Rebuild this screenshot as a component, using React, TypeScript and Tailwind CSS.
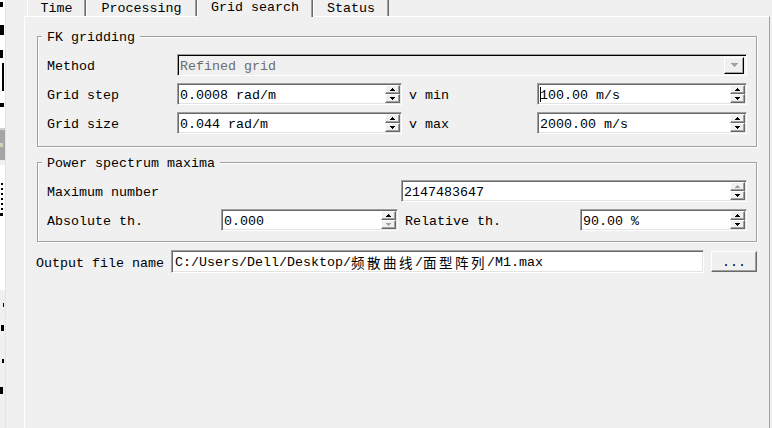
import type { ReactNode } from "react";

const raised =
  "bg-[#f0f0f0] border border-t-white border-l-white border-r-[#696969] border-b-[#696969] shadow-[inset_-1px_-1px_0_#a0a0a0]";
const sunken =
  "border border-t-[#a0a0a0] border-l-[#a0a0a0] border-r-white border-b-white";

function Arrow({ up, off }: { up?: boolean; off?: boolean }) {
  return (
    <svg width="5" height="3" viewBox="0 0 5 3" shapeRendering="crispEdges">
      <polygon points={up ? "2.5,0 5,3 0,3" : "0,0 5,0 2.5,3"} fill={off ? "#a0a0a0" : "#000"} />
    </svg>
  );
}

function Label({ children, className = "" }: { children: ReactNode; className?: string }) {
  return <span className={`pt-[4px] whitespace-nowrap ${className}`}>{children}</span>;
}

function Spin({
  value,
  className = "",
  upOff,
  downOff,
  caret,
}: {
  value: string;
  className?: string;
  upOff?: boolean;
  downOff?: boolean;
  caret?: boolean;
}) {
  return (
    <div
      className={`flex h-[22px] bg-white ${sunken} shadow-[inset_1px_1px_0_#696969,inset_-1px_-1px_0_#e3e3e3] ${className}`}
    >
      <div className="flex flex-1 items-center pl-[2px] pt-[3px] whitespace-nowrap">
        {caret && <span className="-mr-[1px] mb-[2px] h-[15px] w-[1px] bg-black" />}
        {value}
      </div>
      <div className="mr-[1px] flex w-[15px] flex-col py-[1px]">
        <div className={`${raised} flex flex-1 items-center justify-center`}>
          <Arrow up off={upOff} />
        </div>
        <div className={`${raised} flex flex-1 items-center justify-center`}>
          <Arrow off={downOff} />
        </div>
      </div>
    </div>
  );
}

function Group({ title, className = "", children }: { title: string; className?: string; children: ReactNode }) {
  return (
    <div
      className={`relative ml-[12px] w-[720px] border border-[#a0a0a0] shadow-[1px_1px_0_#fff,inset_1px_1px_0_#fff] ${className}`}
    >
      <span className="absolute -top-[7px] left-[4px] bg-[#f0f0f0] px-[5px] pt-[1px] leading-[14px]">{title}</span>
      {children}
    </div>
  );
}

function Tab({ label, width, active }: { label: string; width: string; active?: boolean }) {
  return (
    <div
      className={`flex items-center justify-center border-l border-l-white border-r border-r-[#696969] shadow-[inset_-1px_0_0_#a0a0a0] ${width} ${
        active ? "relative z-10 h-[17px] bg-[#f0f0f0] pb-[2px]" : "h-[16px] pt-[2px]"
      }`}
    >
      {label}
    </div>
  );
}

// clipped edge of the window lying behind this one
function BehindStrip() {
  return (
    <div className="flex h-full w-[5px] flex-col">
      <div className="h-[2px] bg-white" />
      <div className="h-[5px] bg-white"><div className="h-full w-[3px] bg-black" /></div>
      <div className="h-[18px] bg-white" />
      <div className="h-[10px] bg-white"><div className="h-full w-[4px] bg-black" /></div>
      <div className="h-[15px] bg-white" />
      <div className="h-[8px] bg-white"><div className="h-full w-[3px] bg-black" /></div>
      <div className="h-[5px] bg-white" />
      <div className="h-[28px] bg-white"><div className="ml-[2px] h-full w-[2px] bg-black" /></div>
      <div className="h-[12px] bg-white" />
      <div className="h-[4px] bg-white"><div className="h-full w-[4px] bg-black" /></div>
      <div className="h-[21px] bg-white" />
      <div className="h-[2px] bg-[#d0d0d0]" />
      <div className="flex h-[30px] flex-col justify-center bg-[#a5a5a5]">
        <div className="h-[4px] w-[3px] bg-[#d8cfb8]" />
      </div>
      <div className="h-[5px] bg-[#f0f0f0]" />
      <div className="h-[18px] bg-white" />
      <div className="h-[30px] bg-white">
        <div className="ml-[1px] h-full w-[2px] bg-[repeating-linear-gradient(#000_0_2px,transparent_2px_5px)]" />
      </div>
      <div className="h-[10px] bg-white"><div className="h-[3px] w-[3px] bg-black" /></div>
      <div className="h-[67px] bg-white" />
      <div className="h-[13px]" />
      <div className="h-[4px]"><div className="ml-[3px] h-full w-[1px] bg-black" /></div>
      <div className="h-[18px]" />
      <div className="h-[6px]"><div className="ml-[1px] h-full w-[3px] bg-black" /></div>
      <div className="h-[28px]" />
      <div className="h-[4px]"><div className="ml-[2px] h-full w-[2px] bg-black" /></div>
      <div className="h-[24px]" />
      <div className="h-[7px]"><div className="h-full w-[3px] bg-black" /></div>
    </div>
  );
}

export default function App() {
  return (
    <div className="flex h-[428px] w-[772px] overflow-hidden bg-[#f0f0f0] font-['Liberation_Mono',monospace] text-[13.33px] leading-none text-black">
      <div className="flex w-[24px] shrink-0">
        <BehindStrip />
        <div className="w-[1px] bg-[#e3e3e3]" />
      </div>

      <div className="flex w-[746px] shrink-0 flex-col">
        <div className="flex h-[16px] items-start pl-[3px]">
          <Tab label="Time" width="w-[59px]" />
          <Tab label="Processing" width="w-[111px]" />
          <Tab label="Grid search" width="w-[116px]" active />
          <Tab label="Status" width="w-[76px]" />
        </div>

        <div className="flex-1 border-l border-t border-l-white border-t-white border-r border-r-[#a0a0a0] pt-[19px]">
          <Group title="FK gridding" className="pt-[17px] pb-[12px] pl-[9px]">
            <div className="grid grid-cols-[130px_225px_135px_210px] items-center gap-y-[7px]">
              <Label>Method</Label>
              <div
                className={`col-span-3 flex h-[22px] items-center bg-[#f0f0f0] ${sunken} shadow-[inset_1px_1px_0_#000]`}
              >
                <span className="flex-1 pl-[2px] pt-[3px] text-[#6d6d6d]">Refined grid</span>
                <div className="mr-[2px] flex h-[17px] w-[20px] items-center justify-center border border-t-white border-l-white border-r-black border-b-black bg-[#f0f0f0] shadow-[inset_-1px_-1px_0_#a0a0a0]">
                  <svg width="7" height="4" viewBox="0 0 7 4" shapeRendering="crispEdges">
                    <polygon points="0,0 7,0 3.5,4" fill="#a0a0a0" />
                  </svg>
                </div>
              </div>

              <Label>Grid step</Label>
              <Spin value="0.0008 rad/m" />
              <Label className="pl-[7px]">v min</Label>
              <Spin value="100.00 m/s" caret />

              <Label>Grid size</Label>
              <Spin value="0.044 rad/m" />
              <Label className="pl-[7px]">v max</Label>
              <Spin value="2000.00 m/s" />
            </div>
          </Group>

          <Group title="Power spectrum maxima" className="mt-[15px] pt-[17px] pb-[10px] pl-[9px]">
            <div className="flex flex-col gap-[7px]">
              <div className="flex items-center">
                <Label className="w-[354px]">Maximum number</Label>
                <Spin value="2147483647" className="w-[346px]" upOff />
              </div>
              <div className="flex items-center">
                <Label className="w-[174px]">Absolute th.</Label>
                <Spin value="0.000" className="w-[177px]" downOff />
                <Label className="w-[182px] pl-[7px]">Relative th.</Label>
                <Spin value="90.00 %" className="w-[167px]" />
              </div>
            </div>
          </Group>

          <div className="mt-[8px] ml-[11px] flex items-center">
            <Label className="w-[135px]">Output file name</Label>
            <div
              className={`flex h-[23px] w-[533px] items-center bg-white pl-[3px] pt-[3px] whitespace-nowrap ${sunken} shadow-[inset_1px_1px_0_#696969,inset_-1px_-1px_0_#e3e3e3]`}
            >
              C:/Users/Dell/Desktop/
              <span className="font-['Noto_Sans_CJK_SC',sans-serif] text-[13.5px] leading-none tracking-[2.5px]">频散曲线</span>/
              <span className="font-['Noto_Sans_CJK_SC',sans-serif] text-[13.5px] leading-none tracking-[2.5px]">面型阵列</span>/M1.max
            </div>
            <button className={`ml-[7px] flex h-[21px] w-[46px] items-center justify-center pt-[3px] ${raised}`}>...</button>
          </div>
        </div>
      </div>
    </div>
  );
}
